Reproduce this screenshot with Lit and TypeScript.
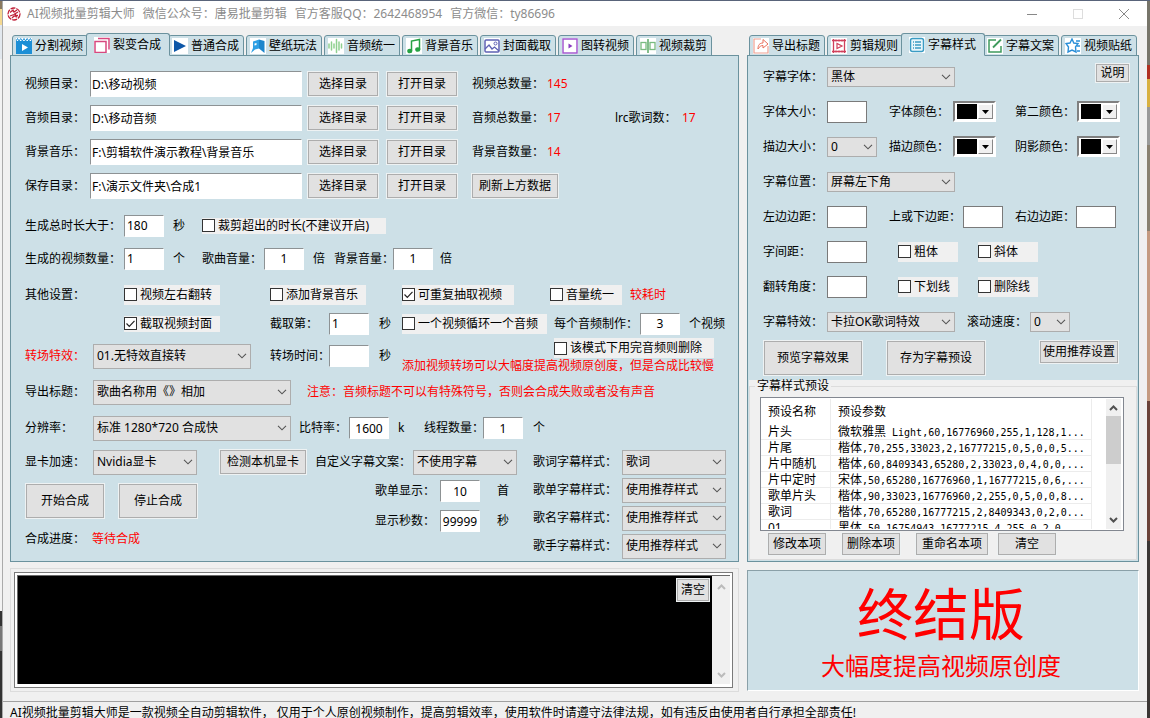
import { LitElement, html, css, svg, nothing } from "lit";
import { customElement } from "lit/decorators.js";
import { classMap } from "lit/directives/class-map.js";

const tabIcons: Record<string, unknown> = {
  clip: svg`<rect x="0" y="3" width="16" height="13" fill="#1c8fd6"/><path d="M0 3 1.500 .5 3 3 4.700 .5 6.300 3 8 .5 9.600 3 11.200 .5 12.800 3 14.400 .5 16 3" fill="none" stroke="#1c8fd6"/><path d="M6 6v7l6-3.500z" fill="#fff"/>`,
  split: svg`<rect x="1" y="4.500" width="11" height="11" fill="#fff" stroke="#d8487f" stroke-width="1.500"/><path d="M4 1.500h11v11" fill="none" stroke="#d8487f" stroke-width="1.500"/>`,
  play: svg`<path d="M2 2v12l12-6z" fill="#0d57a8"/>`,
  wall: svg`<path d="M3 3.500 9 1.500v9L5 11.500 1 15l2-5z" fill="#2fa0e4"/><path d="M9 1.500 14.500 3v12L9 10.500z" fill="#1c86cc"/><path d="M4.500 5.500l2-.5v2l-2 .5z" fill="#fff"/>`,
  wave: svg`<path d="M1 6v4M3.500 4v8M6 6v4M8.500 1.500v13M11 4v8M13.500 6v4" stroke="#8fd08f" stroke-width="1.500" stroke-linecap="round"/>`,
  music: svg`<path d="M5.500 12.500V3l8-1.500v9.500" fill="none" stroke="#27a244" stroke-width="1.500"/><ellipse cx="3.800" cy="13" rx="2.600" ry="2.300" fill="#27a244"/><ellipse cx="11.800" cy="11.500" rx="2.600" ry="2.300" fill="#27a244"/>`,
  image: svg`<rect x="1" y="2" width="14" height="12" rx="1" fill="#fff" stroke="#5f62b4" stroke-width="1.500"/><path d="M1 11l4-4 3 4 2.500-2L15 13" fill="none" stroke="#5f62b4" stroke-width="1.300"/><circle cx="11.500" cy="5.500" r="1.500" fill="none" stroke="#5f62b4"/>`,
  still: svg`<rect x="1" y="1" width="14" height="14" fill="#fff" stroke="#a45ad0" stroke-width="1.500"/><path d="M6.500 5.500v5l4-2.500z" fill="#8a3cc0"/>`,
  cut: svg`<path d="M8 1v14" stroke="#5aa864" stroke-width="1.500"/><rect x="1" y="4.500" width="5" height="7" fill="none" stroke="#79bb80" stroke-width="1.300"/><rect x="10" y="4.500" width="5" height="7" fill="none" stroke="#79bb80" stroke-width="1.300"/>`,
  share: svg`<path d="M8 1H1v14h14V8" fill="none" stroke="#f0a092" stroke-width="1.200"/><path d="M5 11c0-4 1.500-6 5-6V1.500l5 4.500-5 4V7.500c-2 0-3.500 1-5 3.500z" fill="#fff" stroke="#e8705c"/>`,
  film: svg`<path d="M1 2.500h14M1 13.500h14M2.500 1v14M13.500 1v14" stroke="#d0405c" stroke-width="1.300"/><path d="M5 1.500v2M8 1.500v2M11 1.500v2M5 12.500v2M8 12.500v2M11 12.500v2" stroke="#d0405c"/><path d="M6 5.500v5l5-2.500z" fill="none" stroke="#d0405c" stroke-width="1.200"/>`,
  list: svg`<rect x="1.500" y="1.500" width="13" height="13" rx="2" fill="#e8f6fb" stroke="#3b9cc4" stroke-width="1.500"/><path d="M4 5h1M6 5h6M4 8h1M6 8h6M4 11h1M6 11h6" stroke="#3b9cc4" stroke-width="1.300"/>`,
  edit: svg`<path d="M9 2H2v12h12V8" fill="none" stroke="#3f9a5c" stroke-width="1.500"/><path d="M6 9.500 14 1.500" stroke="#3f9a5c" stroke-width="1.800"/>`,
  star: svg`<path d="M7 1l1.800 4L13 5.500 10.500 9l.5 5-4-2-4 2 .5-5L1 5.500 5 5z" fill="#fff" stroke="#2a8fd8" stroke-width="1.400"/><path d="M11 3h4M12 8h3M12 13h3" stroke="#2a8fd8" stroke-width="1.300"/>`,
};

interface Tab { icon: string; text: string; active?: boolean }

const mainTabs: Tab[] = [
  { icon: "clip", text: "分割视频" },
  { icon: "split", text: "裂变合成", active: true },
  { icon: "play", text: "普通合成" },
  { icon: "wall", text: "壁纸玩法" },
  { icon: "wave", text: "音频统一" },
  { icon: "music", text: "背景音乐" },
  { icon: "image", text: "封面截取" },
  { icon: "still", text: "图转视频" },
  { icon: "cut", text: "视频裁剪" },
];

const sideTabs: Tab[] = [
  { icon: "share", text: "导出标题" },
  { icon: "film", text: "剪辑规则" },
  { icon: "list", text: "字幕样式", active: true },
  { icon: "edit", text: "字幕文案" },
  { icon: "star", text: "视频贴纸" },
];

const presets: [string, string, string][] = [
  ["片头", "微软雅黑", " Light,60,16776960,255,1,128,1..."],
  ["片尾", "楷体", ",70,255,33023,2,16777215,0,5,0,0,5..."],
  ["片中随机", "楷体", ",60,8409343,65280,2,33023,0,4,0,0,..."],
  ["片中定时", "宋体", ",50,65280,16776960,1,16777215,0,6,..."],
  ["歌单片头", "楷体", ",90,33023,16776960,2,255,0,5,0,0,8..."],
  ["歌词", "楷体", ",70,65280,16777215,2,8409343,0,2,0..."],
  ["01", "黑体", ",50,16754943,16777215,4,255,0,2,0"],
];

const tabStrip = (tabs: Tab[]) => html`
  <div class="tabs" role="tablist">
    ${tabs.map((t) => html`
      <button class=${classMap({ tab: true, active: !!t.active })} role="tab" aria-selected=${t.active ? "true" : "false"}>
        <svg class="tab-icon" viewBox="0 0 16 16" fill="none">${tabIcons[t.icon]}</svg>${t.text}
      </button>`)}
  </div>`;

const label = (id: string, text: string, cls = "") => html`<label class=${cls} for=${id}>${text}</label>`;

const box = (id: string, value = "", cls = "") =>
  html`<input class="box ${cls}" id=${id} type="text" .value=${value} />`;

const pick = (id: string, value: string, cls = "") => html`
  <span class="pick ${cls}">
    <select id=${id}><option>${value}</option></select>
    <svg class="chev" viewBox="0 0 10 6"><path d="M1 .8 5 4.800 9 .8" fill="none" stroke="#555" stroke-width="1.100"/></svg>
  </span>`;

const tick = (text: string, cls = "", checked = false) => html`
  <label class="tick ${cls}">
    <span class="tick-box">
      <input type="checkbox" .checked=${checked} />
      ${checked ? html`<svg class="mark" viewBox="0 0 13 13"><path d="M2.500 6.500 5.300 9.300 10.500 3.800" fill="none" stroke="#222" stroke-width="1.200"/></svg>` : nothing}
    </span>${text}
  </label>`;

const swatch = (id: string) => html`
  <button class="swatch" id=${id}>
    <span class="swatch-color"></span>
    <span class="swatch-drop"><svg viewBox="0 0 7 4" width="7" height="4"><path d="M0 0h7L3.500 4z" fill="#000"/></svg></span>
  </button>`;

const scrollChevron = (up: boolean, color: string) => html`
  <svg class="scroll-chev" viewBox="0 0 9 6"><path d=${up ? "M1 5 4.500 1.500 8 5" : "M1 1 4.500 4.500 8 1"} fill="none" stroke=${color} stroke-width="2"/></svg>`;

@customElement("app-root")
export class AppRoot extends LitElement {
  static styles = css`
    :host {
      display: grid;
      grid-template-columns: 3px minmax(0, 1fr) 3px;
      height: 100vh;
      overflow: hidden;
      box-sizing: border-box;
      border-top: 1px solid #59647a;
      background: #f0f0f0;
      color: #000;
      font: 12px/16px "Noto Sans", "Noto Sans CJK SC", sans-serif;
    }
    * { box-sizing: border-box; }
    button, input, select { font: inherit; color: inherit; margin: 0; border-radius: 0; }
    label, span, p { white-space: nowrap; }
    .edge-left { background: linear-gradient(#8a7a60 0 8px, #f4d890 8px 24px, #e2e8ee 24px 58px, #f2f2f2 58px 610px, #333 610px 625px, #777 625px 650px, #333 650px); border-right: 1px solid #aaa; }
    .edge-right { background: linear-gradient(#77756a 0 64px, #b03020 64px 78px, #d8b040 78px 106px, #999 106px 144px, #8a8070 144px 230px, #c49a80 230px 400px, #6a4238 400px 540px, #3a3634 540px); }
    .window { display: flex; flex-direction: column; min-width: 0; }

    .titlebar { display: flex; align-items: center; gap: 8px; flex: none; height: 25px; padding: 0 12px 0 4px; background: #fff; color: #8c8c8c; }
    .logo { width: 14px; height: 14px; margin-right: -2px; }
    .controls { display: flex; gap: 24px; margin-left: auto; }
    .control { width: 22px; height: 22px; padding: 4px; border: 0; background: none; }
    .control svg { display: block; width: 14px; height: 14px; }

    .body { display: grid; grid-template-columns: minmax(0, 1fr) 392px; column-gap: 8px; row-gap: 6px; padding: 7px 8px 9px 7px; }
    .column { display: flex; flex-direction: column; min-width: 0; }

    .tabs { display: flex; align-items: flex-end; gap: 2px; height: 23px; padding-left: 2px; margin-bottom: -1px; }
    .tab { display: flex; align-items: center; gap: 3px; width: 76px; height: 21px; padding: 0 0 0 3px; border: 1px solid #6b929e; border-radius: 3px 3px 0 0; background: #cde0e7; white-space: nowrap; }
    .tab.active { position: relative; width: 84px; height: 23px; margin: 0 -4px; padding-left: 7px; border-bottom-color: #cde0e7; }
    .tab-icon { flex: none; width: 16px; height: 16px; background: #fff; }
    .panel { flex: 1; border: 1px solid #6b929e; background: #cde0e7; }
    .main { padding: 10px 11px 0 14px; }
    .red { color: #f00; }

    .btn { height: 24px; padding: 0; border: 1px solid #adadad; background: #e1e1e1; box-shadow: 0 0 0 1px #eef2f3; white-space: nowrap; }
    .btn.large { height: 34px; }
    .btn.small { height: 18px; line-height: 14px; }
    .btn.wide { width: 100%; }

    .box { width: 40px; height: 22px; padding: 0 2px; border: 1px solid #fff; border-top-color: #8d9294; border-left-color: #8d9294; background: #fff; outline: 0; }
    .box.path { width: 212px; height: 26px; padding: 0 1px; }
    .box.mid { text-align: center; padding: 0; }
    .box.framed { border-color: #7a7a7a; }

    .pick { display: grid; align-items: center; width: 104px; height: 25px; }
    .pick select { grid-area: 1 / 1; width: 100%; height: 100%; padding: 0 20px 0 3px; border: 1px solid #adadad; background: #e1e1e1; appearance: none; outline: 0; }
    .pick .chev { grid-area: 1 / 1; justify-self: end; width: 10px; height: 6px; margin-right: 4px; pointer-events: none; }
    .pick.w158 { width: 158px; }
    .pick.w198 { width: 198px; }
    .pick.short { height: 20px; }
    .pick.w128 { width: 128px; }
    .pick.w50 { width: 50px; }
    .pick.w40 { width: 40px; }

    .tick { display: flex; align-items: center; gap: 3px; height: 20px; background: #f0f0f0; }
    .tick.flat { height: 16px; }
    .tick-box { display: grid; flex: none; width: 13px; height: 13px; }
    .tick-box input { grid-area: 1 / 1; width: 13px; height: 13px; border: 1px solid #333; background: #fff; appearance: none; }
    .mark { grid-area: 1 / 1; width: 13px; height: 13px; pointer-events: none; }
    .w60 { width: 60px; }
    .w72 { width: 72px; }
    .w96 { width: 96px; }
    .w112 { width: 112px; }
    .w145 { width: 145px; }
    .w160 { width: 160px; }
    .w184 { width: 184px; }

    .row { display: grid; align-items: center; justify-items: start; }
    .dirs { display: grid; grid-auto-rows: 34px; padding-top: 1px; margin-bottom: 6px; }
    .dirs .row { grid-template-columns: 65px 218px 79px 85px 75px 68px 67px 1fr; }
    .dirs .btn { width: 70px; }
    .dirs .btn.refresh { grid-column: 5 / span 2; width: 86px; }
    .amounts { display: grid; grid-auto-rows: 33px; margin-bottom: 5px; }
    .amounts .row { grid-template-columns: 99px 49px 29px 62px 49px 21px 59px 47px 1fr; }
    .amounts .tick { grid-column: 4 / -1; }
    .options { display: grid; grid-auto-rows: 29px; }
    .options .row.top { grid-template-columns: 99px 146px 132px 148px 80px 1fr; }
    .options .row.counted { grid-template-columns: 99px 146px 59px 50px 23px 152px 86px 49px 1fr; }
    .output { display: grid; grid-auto-rows: 36px; }
    .row.transition { grid-template-columns: 68px 177px 59px 50px 23px 1fr; }
    .row.naming { grid-template-columns: 68px 214px 1fr; }
    .row.encode { grid-template-columns: 68px 206px 50px 49px 26px 59px 50px 1fr; }
    .advice { display: flex; flex-direction: column; justify-content: space-between; height: 36px; }
    .advice .tick { align-self: flex-end; }

    .lower { display: grid; grid-template-columns: 290px 218px 1fr; padding: 2px 0 1px; }
    .gpu { grid-template-columns: 68px 127px 86px; height: 28px; }
    .gpu .btn { width: 86px; }
    .actions { display: flex; gap: 15px; padding: 8px 0 0 1px; }
    .actions .btn { width: 78px; }
    .progress { display: grid; grid-template-columns: 67px 1fr; padding-top: 13px; }
    .song { display: grid; grid-template-rows: 28px 30px 30px; }
    .song .row { grid-template-columns: 98px 1fr; }
    .song .row.inset { grid-template-columns: 65px 57px 1fr; padding-left: 60px; }
    .styles { display: grid; grid-template-rows: repeat(4, 28px); }
    .styles .row { grid-template-columns: 89px 1fr; }

    .side { display: flex; flex-direction: column; padding: 3px 1px 1px; }
    .style-form { display: grid; grid-auto-rows: 35px; padding-left: 14px; }
    .style-form .row { grid-template-columns: 64px 62px 64px 62px 62px 1fr; }
    .style-form .row.font { grid-template-columns: 64px 269px 1fr; }
    .style-form .row.margins { grid-template-columns: 64px 62px 74px 52px 61px 1fr; }
    .style-form .row.flags { grid-template-columns: 64px 71px 80px 1fr; }
    .style-form .row.effect { grid-template-columns: 64px 140px 63px 1fr; }
    .font .btn { width: 33px; }
    .style-form .font .btn { align-self: start; margin-top: 5px; }
    .swatch { display: flex; width: 43px; height: 21px; padding: 1px; border: 2px solid #fff; border-top-color: #808080; border-left-color: #808080; background: #fff; }
    .swatch-color { flex: 1; background: #000; margin: 0 1px; }
    .swatch-drop { display: grid; place-items: center; width: 15px; background: #f0f0f0; border: 1px solid #fff; border-right-color: #888; border-bottom-color: #888; }
    .style-actions { display: grid; grid-template-columns: 98px 98px 108px; align-items: start; padding: 2px 0 5px 15px; column-gap: 25px; height: 41px; }
    .style-actions .recommend { justify-self: end; width: 78px; height: 22px; }

    .preset-area { flex: 1; background: #f0f0f0; }
    .presets { min-width: 0; margin: 0; padding: 5px 12px 0 10px; border: 1px solid #dcdcdc; height: 100%; }
    .presets legend { padding: 0 2px; margin-left: -5px; line-height: 12px; }
    .list { display: grid; grid-template-columns: minmax(0, 1fr) 15px; height: 134px; padding: 1px 2px 1px 0; border: 1px solid #828790; background: #fff; overflow: hidden; }
    .list-view { height: 130px; overflow: hidden; }
    table { width: 331px; border-spacing: 0; table-layout: fixed; }
    th, td { padding: 0 0 0 7px; border: 0 solid #ececec; border-right-width: 1px; text-align: left; font-weight: 400; line-height: 15px; white-space: nowrap; overflow: hidden; }
    th { height: 25px; }
    td { height: 16px; border-bottom-width: 1px; }
    .name-col { width: 70px; }
    .params { font: 10px/10px "DejaVu Sans Mono", monospace; white-space: pre; }
    .scroll { display: flex; flex-direction: column; align-items: center; justify-content: space-between; height: 130px; background: #f0f0f0; padding: 6px 0; }
    .scroll-chev { flex: none; width: 9px; height: 6px; }
    .thumb { width: 100%; height: 48px; margin: 5px 0 auto; background: #cdcdcd; }
    .preset-actions { display: flex; gap: 16px; padding: 2px 8px 0; }
    .preset-actions .btn { height: 22px; width: 58px; }
    .preset-actions .btn.rename { width: 72px; }
    .preset-actions .btn.rename + .btn { margin-left: -6px; }

    .console-frame { padding: 3px 5px 3px 3px; border: 1px solid #dcdcdc; height: 124px; }
    .console-edge { height: 116px; padding: 2px; border: 1px solid #7a7a7a; background: #fff; }
    .console { display: grid; grid-template-columns: minmax(0, 1fr) 18px; height: 109px; border-top: 1px solid #696969; border-left: 1px solid #696969; }
    .console-view { display: flex; justify-content: flex-end; padding: 3px; background: #000; }
    .console-view .btn { width: 32px; height: 22px; }
    .console .scroll { height: 108px; padding: 8px 0 6px; }
    .banner { height: 121px; margin-top: 2px; padding-right: 4px; border: 1px solid #fff; border-top-color: #8aa0a8; border-left-color: #8aa0a8; background: #cde0e7; color: #f00; text-align: center; }
    .banner .headline { margin: 10px 0 8px; font-size: 56px; line-height: 64px; }
    .banner .tagline { margin: 0; font-size: 24px; line-height: 26px; }
    .status { flex: none; padding: 3px 7px; margin: 0; border-top: 1px solid #a0a0a0; }
  `;

  private dirRow(id: string, text: string, path: string, tail: unknown) {
    return html`
      <div class="row">
        ${label(id, text)}${box(id, path, "path")}
        <button class="btn">选择目录</button>
        <button class="btn">打开目录</button>
        ${tail}
      </div>`;
  }

  private mainForm() {
    return html`
      <div class="panel main">
        <div class="dirs">
          ${this.dirRow("dir-video", "视频目录：", "D:\\移动视频", html`<span>视频总数量：</span><span class="red">145</span>`)}
          ${this.dirRow("dir-audio", "音频目录：", "D:\\移动音频", html`<span>音频总数量：</span><span class="red">17</span><span>lrc歌词数：</span><span class="red">17</span>`)}
          ${this.dirRow("dir-bgm", "背景音乐：", "F:\\剪辑软件演示教程\\背景音乐", html`<span>背景音数量：</span><span class="red">14</span>`)}
          ${this.dirRow("dir-save", "保存目录：", "F:\\演示文件夹\\合成1", html`<button class="btn refresh">刷新上方数据</button>`)}
        </div>
        <div class="amounts">
          <div class="row">
            ${label("duration", "生成总时长大于：")}${box("duration", "180")}<span>秒</span>${tick("裁剪超出的时长(不建议开启)", "flat w184")}
          </div>
          <div class="row">
            ${label("count", "生成的视频数量：")}${box("count", "1")}<span>个</span>
            ${label("song-vol", "歌曲音量：")}${box("song-vol", "1", "mid")}<span>倍</span>
            ${label("bgm-vol", "背景音量：")}${box("bgm-vol", "1", "mid")}<span>倍</span>
          </div>
        </div>
        <div class="options">
          <div class="row top">
            <span>其他设置：</span>${tick("视频左右翻转", "w96")}${tick("添加背景音乐", "w96")}
            ${tick("可重复抽取视频", "w112", true)}${tick("音量统一", "w72")}<span class="red">较耗时</span>
          </div>
          <div class="row counted">
            <span></span>${tick("截取视频封面", "w96 flat", true)}
            ${label("cover-sec", "截取第：")}${box("cover-sec", "1")}<span>秒</span>
            ${tick("一个视频循环一个音频", "w145")}
            ${label("per-audio", "每个音频制作：")}${box("per-audio", "3", "mid")}<span>个视频</span>
          </div>
        </div>
        <div class="output">
          <div class="row transition">
            ${label("transition", "转场特效：", "red")}${pick("transition", "01.无特效直接转", "w158")}
            ${label("transition-time", "转场时间：")}${box("transition-time")}<span>秒</span>
            <div class="advice">
              ${tick("该模式下用完音频则删除", "w160")}
              <span class="red">添加视频转场可以大幅度提高视频原创度，但是合成比较慢</span>
            </div>
          </div>
          <div class="row naming">
            ${label("naming", "导出标题：")}${pick("naming", "歌曲名称用《》相加", "w198")}
            <span class="red">注意：音频标题不可以有特殊符号，否则会合成失败或者没有声音</span>
          </div>
          <div class="row encode">
            ${label("resolution", "分辨率：")}${pick("resolution", "标准 1280*720 合成快", "w198")}
            ${label("bitrate", "比特率：")}${box("bitrate", "1600", "mid")}<span>k</span>
            ${label("threads", "线程数量：")}${box("threads", "1", "mid")}<span>个</span>
          </div>
        </div>
        <div class="lower">
          <div>
            <div class="row gpu">
              ${label("gpu", "显卡加速：")}${pick("gpu", "Nvidia显卡")}<button class="btn">检测本机显卡</button>
            </div>
            <div class="actions">
              <button class="btn large">开始合成</button>
              <button class="btn large">停止合成</button>
            </div>
            <div class="progress"><span>合成进度：</span><span class="red">等待合成</span></div>
          </div>
          <div class="song">
            <div class="row">${label("subtitle", "自定义字幕文案：")}${pick("subtitle", "不使用字幕")}</div>
            <div class="row inset">${label("song-show", "歌单显示：")}${box("song-show", "10", "mid")}<span>首</span></div>
            <div class="row inset">${label("show-sec", "显示秒数：")}${box("show-sec", "99999", "mid")}<span>秒</span></div>
          </div>
          <div class="styles">
            <div class="row">${label("style-lyric", "歌词字幕样式：")}${pick("style-lyric", "歌词")}</div>
            <div class="row">${label("style-list", "歌单字幕样式：")}${pick("style-list", "使用推荐样式")}</div>
            <div class="row">${label("style-name", "歌名字幕样式：")}${pick("style-name", "使用推荐样式")}</div>
            <div class="row">${label("style-singer", "歌手字幕样式：")}${pick("style-singer", "使用推荐样式")}</div>
          </div>
        </div>
      </div>`;
  }

  private sideForm() {
    return html`
      <div class="panel side">
        <div class="style-form">
          <div class="row font">${label("font", "字幕字体：")}${pick("font", "黑体", "short w128")}<button class="btn small">说明</button></div>
          <div class="row">
            ${label("size", "字体大小：")}${box("size", "", "framed")}
            ${label("color", "字体颜色：")}${swatch("color")}
            ${label("color2", "第二颜色：")}${swatch("color2")}
          </div>
          <div class="row">
            ${label("stroke", "描边大小：")}${pick("stroke", "0", "short w50")}
            ${label("stroke-color", "描边颜色：")}${swatch("stroke-color")}
            ${label("shadow-color", "阴影颜色：")}${swatch("shadow-color")}
          </div>
          <div class="row">${label("position", "字幕位置：")}${pick("position", "屏幕左下角", "short w128")}</div>
          <div class="row margins">
            ${label("left", "左边边距：")}${box("left", "", "framed")}
            ${label("vertical", "上或下边距：")}${box("vertical", "", "framed")}
            ${label("right", "右边边距：")}${box("right", "", "framed")}
          </div>
          <div class="row flags">${label("spacing", "字间距：")}${box("spacing", "", "framed")}${tick("粗体", "w60")}${tick("斜体", "w60")}</div>
          <div class="row flags">${label("angle", "翻转角度：")}${box("angle", "", "framed")}${tick("下划线", "w60")}${tick("删除线", "w60")}</div>
          <div class="row effect">
            ${label("effect", "字幕特效：")}${pick("effect", "卡拉OK歌词特效", "short w128")}
            ${label("speed", "滚动速度：")}${pick("speed", "0", "short w40")}
          </div>
        </div>
        <div class="style-actions">
          <button class="btn large wide">预览字幕效果</button>
          <button class="btn large wide">存为字幕预设</button>
          <button class="btn recommend">使用推荐设置</button>
        </div>
        <div class="preset-area">
          <fieldset class="presets">
            <legend>字幕样式预设</legend>
            <div class="list">
              <div class="list-view">
                <table>
                  <thead><tr><th class="name-col">预设名称</th><th>预设参数</th></tr></thead>
                  <tbody>
                    ${presets.map(([name, face, params]) => html`
                      <tr><td>${name}</td><td>${face}<span class="params">${params}</span></td></tr>`)}
                  </tbody>
                </table>
              </div>
              <div class="scroll">${scrollChevron(true, "#505050")}<div class="thumb"></div>${scrollChevron(false, "#505050")}</div>
            </div>
            <div class="preset-actions">
              <button class="btn">修改本项</button>
              <button class="btn">删除本项</button>
              <button class="btn rename">重命名本项</button>
              <button class="btn">清空</button>
            </div>
          </fieldset>
        </div>
      </div>`;
  }

  render() {
    return html`
      <div class="edge-left"></div>
      <div class="window">
        <header class="titlebar">
          <svg class="logo" viewBox="0 0 14 14" fill="none" stroke="#c02038">
            <circle cx="7" cy="7" r="6" stroke-width="1.300" stroke-dasharray="5 1"/>
            <path d="M3 5.500 6 3l1 2 3-2M3 9l4-1.500L11 5M5 11l2-2 4-.5M9.500 10.500 8 6" stroke-width="1.300"/>
          </svg>
          <span>AI视频批量剪辑大师</span>
          <span>微信公众号：唐易批量剪辑</span>
          <span>官方客服QQ：2642468954</span>
          <span>官方微信：ty86696</span>
          <div class="controls">
            <button class="control" aria-label="最小化"><svg viewBox="0 0 14 14"><path d="M2 7.500h10" stroke="#888"/></svg></button>
            <button class="control" aria-label="最大化"><svg viewBox="0 0 14 14"><rect x="2.500" y="2.500" width="9" height="9" fill="none" stroke="#ddd"/></svg></button>
            <button class="control" aria-label="关闭"><svg viewBox="0 0 14 14"><path d="M2 2l10 10M12 2 2 12" stroke="#888"/></svg></button>
          </div>
        </header>
        <main class="body">
          <section class="column">${tabStrip(mainTabs)}${this.mainForm()}</section>
          <section class="column">${tabStrip(sideTabs)}${this.sideForm()}</section>
          <section class="console-frame">
            <div class="console-edge">
              <div class="console">
                <div class="console-view"><button class="btn">清空</button></div>
                <div class="scroll">${scrollChevron(true, "#bbb")}${scrollChevron(false, "#bbb")}</div>
              </div>
            </div>
          </section>
          <section class="banner">
            <p class="headline">终结版</p>
            <p class="tagline">大幅度提高视频原创度</p>
          </section>
        </main>
        <p class="status">AI视频批量剪辑大师是一款视频全自动剪辑软件， 仅用于个人原创视频制作，提高剪辑效率，使用软件时请遵守法律法规，如有违反由使用者自行承担全部责任!</p>
      </div>
      <div class="edge-right"></div>`;
  }
}
